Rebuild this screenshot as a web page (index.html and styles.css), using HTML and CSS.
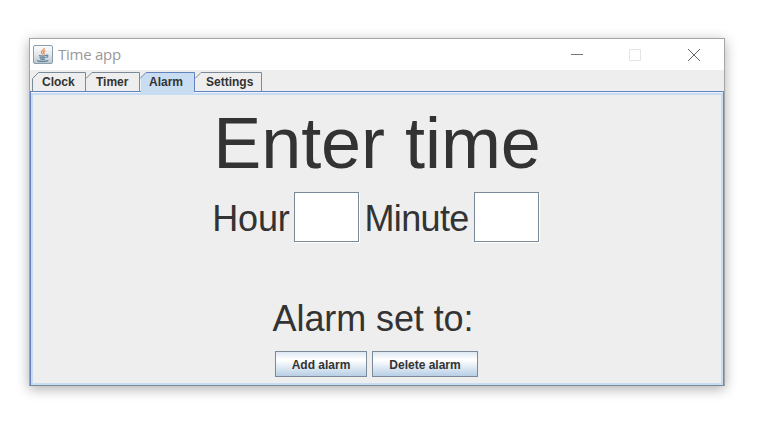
FILE: index.html
```html
<!DOCTYPE html>
<html lang="en">
<head>
<meta charset="utf-8">
<title>Time app</title>
<link rel="stylesheet" href="styles.css">
</head>
<body>
<main class="window">
  <header class="titlebar">
    <svg class="app-icon" width="20" height="20" viewBox="0 0 20 20">
      <defs><linearGradient id="g" x1="0" y1="0" x2="0" y2="1"><stop offset="0" stop-color="#fdfdfd"/><stop offset=".5" stop-color="#e4e8ea"/><stop offset="1" stop-color="#b9c6ce"/></linearGradient></defs>
      <rect x=".5" y=".5" width="19" height="18" rx="1.5" fill="url(#g)" stroke="#8a9dad"/>
      <path d="M11.2 3c.6 2-3.600 2.600-2.700 4.600.3.800 1 1.200.8 2M12.400 5.600c-1.800.8-2.200 1.600-1.400 2.600.4.600.1 1-.3 1.400" fill="none" stroke="#e58a4e" stroke-width="1.300"/>
      <path d="M6 10.500c1.500.7 5.500.7 7 0M6.500 12.300c1.500.6 4.700.6 6.100 0M7.100 14c1.300.4 3.700.4 4.800 0M13 10.300c2.500-.6 2.600 1.500.3 2.300M4.600 15.200c-.8 1.500 8.800 1.700 10.500.3" fill="none" stroke="#5c7f9a" stroke-width="1.200"/>
    </svg>
    <h1 class="title">Time app</h1>
    <div class="controls">
      <svg width="14" height="14"><path d="M2 6.500h12" stroke="#777"/></svg>
      <svg width="14" height="14"><path d="M1.500 1.500h11v11h-11z" fill="none" stroke="#e4e4e4"/></svg>
      <svg width="14" height="14"><path d="M1 1l12 12M13 1L1 13" stroke="#666"/></svg>
    </div>
  </header>
  <nav class="tabs">
    <div class="tab"><svg class="shape" width="55" height="20"><path d="M.5 20V6.500L6.500 .5H53.500V20"/></svg><span>Clock</span></div>
    <div class="tab"><svg class="shape" width="55" height="20"><path d="M0 6.500L6 .5H53.500V20"/></svg><span>Timer</span></div>
    <div class="tab active"><svg class="shape" width="55" height="23"><path class="fill" d="M1 23V6L7 0H54V23z"/><path d="M0 6.500L6 .500H54.500V20"/></svg><span>Alarm</span></div>
    <div class="tab wide"><svg class="shape" width="68" height="20"><path d="M1 6.500L7 .5H67.500V20"/></svg><span>Settings</span></div>
  </nav>
  <section class="panel">
    <h2 class="heading">Enter time</h2>
    <div class="fields">
      <label for="hour">Hour</label><input id="hour" class="hour" type="text">
      <label for="minute" class="minute">Minute</label><input id="minute" type="text">
    </div>
    <p class="status">Alarm set to:</p>
    <div class="actions">
      <button class="add">Add alarm</button>
      <button class="delete">Delete alarm</button>
    </div>
  </section>
</main>
</body>
</html>
```
FILE: styles.css
```css
* { box-sizing: border-box; }
body {
  margin: 0;
  padding: 38px 0 0 29px;
  height: 421px;
  overflow: hidden;
  background: #fff;
  color: #333;
  font-family: "Liberation Sans", Arial, sans-serif;
}
h1, h2, p { margin: 0; font-weight: 400; }
.window {
  display: flex;
  flex-direction: column;
  width: 696px;
  height: 348px;
  border: 1px solid #a5a5a5;
  border-bottom-color: #78899c;
  background: #eee;
  box-shadow: 0 3px 12px rgba(0, 0, 0, .32);
}
.titlebar {
  display: flex;
  align-items: center;
  height: 31px;
  padding-left: 3px;
  background: #fff;
}
.title {
  margin: -1px 0 0 5px;
  color: #999;
  font: 400 15px/20px "Open Sans", "Noto Sans", sans-serif;
  letter-spacing: -.25px;
  white-space: nowrap;
}
.controls {
  display: flex;
  gap: 45px;
  margin-left: auto;
  padding-right: 23px;
}
.controls svg { display: block; }
.tabs {
  display: flex;
  height: 21px;
  padding: 2px 0 0 2px;
}
.tab {
  position: relative;
  width: 54px;
  height: 19px;
  padding-left: 10px;
  font-size: 12px;
  font-weight: 700;
  line-height: 20px;
}
.tab.wide { width: 68px; padding-left: 12px; }
.tab.active { z-index: 1; padding-left: 9px; }
.tab span { position: relative; }
.shape {
  position: absolute;
  top: 0;
  left: 0;
  fill: none;
  stroke: #7a8a99;
}
.active .shape { stroke: #6382bf; }
.shape .fill { fill: #c8ddf2; stroke: none; }
.panel {
  display: flex;
  flex: 1;
  flex-direction: column;
  align-items: center;
  border: 1px solid #6382bf;
  border-right-color: #7a8a99;
  border-bottom: 0;
  box-shadow: inset 0 1px #eef4fb, inset 0 0 0 2px #c8ddf2, inset 0 3px #c8ddf2;
}
.heading {
  margin: 10px 0 0;
  font-size: 72px;
  line-height: 83px;
  letter-spacing: -.05px;
  white-space: nowrap;
}
.fields {
  display: flex;
  align-items: center;
  height: 50px;
  margin: 7px 3px 0 0;
  font-size: 36px;
}
.fields label {
  padding-top: 4px;
  letter-spacing: -.2px;
}
.fields input {
  width: 65px;
  height: 50px;
  margin-left: 5px;
  padding: 0 3px;
  border: 1px solid #7a8a99;
  border-radius: 0;
  background: #fff;
  box-shadow: 1px 1px #fff;
  color: #333;
  font: inherit;
}
.fields .hour { margin-left: 4px; }
.fields .minute {
  margin-left: 6px;
  letter-spacing: -.65px;
}
.status {
  margin-top: 56px;
  font-size: 36px;
  line-height: 42px;
  letter-spacing: -.1px;
  transform: translateX(-4px);
}
.actions {
  display: flex;
  gap: 5px;
  margin: 11px 2px 0 0;
}
.actions button {
  height: 26px;
  padding: 1px 0 0 1px;
  border: 1px solid #7a8a99;
  border-radius: 0;
  background: linear-gradient(#dde8f3, #fff 30%, #fff 34%, #b8cfe5);
  color: #333;
  font: 700 12px "Liberation Sans", Arial, sans-serif;
}
.add { width: 92px; }
.delete { width: 106px; }
```
